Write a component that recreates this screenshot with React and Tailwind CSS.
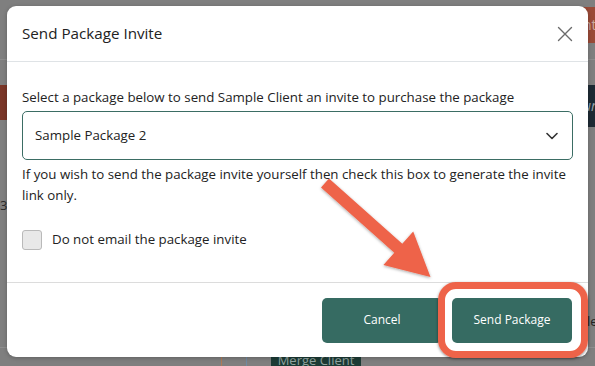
import React from "react";

function ChevronDown() {
  return (
    <svg width="12" height="8" viewBox="0 0 12 8" fill="none">
      <path d="M1 1.5 L6 6.5 L11 1.5" stroke="#333" strokeWidth="1.6" strokeLinecap="round" strokeLinejoin="round" />
    </svg>
  );
}

function CloseX() {
  return (
    <svg width="16" height="16" viewBox="0 0 16 16" fill="none">
      <path d="M1.5 1.5 L14.5 14.5 M14.5 1.5 L1.5 14.5" stroke="#6b6b6b" strokeWidth="1.4" strokeLinecap="round" />
    </svg>
  );
}

export default function App() {
  const font = { fontFamily: '"Open Sans", "Noto Sans", sans-serif' };
  return (
    <div className="relative w-[595px] h-[366px] overflow-hidden bg-[#7f7f7f]" style={font}>
      {/* page fragments under the overlay */}
      <div className="absolute left-0 top-[59px] w-full h-px bg-[#8c8c8c]" />
      <div className="absolute left-0 top-[85px] w-[10px] h-[35px] bg-[#7a3627]" />
      <div className="absolute right-0 top-[7px] w-[12px] h-[36px] bg-[#9a4a37] text-[#c9a89c] text-[14px] leading-[36px] overflow-hidden">nt</div>
      <div className="absolute right-0 top-[85px] w-[12px] h-[42px] bg-[#1d2a34] text-[#9aa4ad] text-[14px] italic leading-[42px] overflow-hidden">ur</div>
      <div className="absolute left-0 top-[196px] text-[13px] text-[#2b2b2b]">3</div>
      <div className="absolute right-0 w-[8px] top-[312px] text-[13px] text-[#222] overflow-hidden">le</div>
      <div className="absolute left-0 top-[347px] w-full h-px bg-[#8e8e8e]" />
      <div className="absolute left-[221px] top-[347px] w-px h-[19px] bg-[#b07a55]" />
      <div className="absolute left-[246px] top-[347px] w-px h-[19px] bg-[#6f8aa3]" />
      <div className="absolute left-[271px] top-[352px] w-[90px] h-[20px] bg-[#1c3b35] text-[#8fa39f] text-[13px] text-center leading-[16px]">Merge Client</div>

      {/* modal */}
      <div className="relative z-10 ml-[7px] mt-[6px] w-[581px] h-[351px] bg-white rounded-[9px] flex flex-col shadow-[0_1px_4px_rgba(0,0,0,0.25)]">
        <div className="h-[56px] shrink-0 flex items-center justify-between pl-[15px] pr-[15px] border-b border-[#dfe3e6]">
          <div className="text-[15.2px] text-[#222] leading-none">Send Package Invite</div>
          <CloseX />
        </div>
        <div className="flex-1 px-[15px] pt-[25px] flex flex-col">
          <div className="text-[13.3px] leading-[20px] text-[#222]">Select a package below to send Sample Client an invite to purchase the package</div>
          <div className="mt-[4px] h-[49px] border border-[#3b6d64] rounded-[5px] flex items-center justify-between pl-[12px] pr-[14px]">
            <span className="text-[13.3px] text-[#222]">Sample Package 2</span>
            <ChevronDown />
          </div>
          <div className="mt-[4px] text-[13.3px] leading-[21px] text-[#222]">
            If you wish to send the package invite yourself then check this box to generate the invite link only.
          </div>
          <div className="mt-[24px] flex items-center gap-[10px]">
            <div className="w-[20px] h-[20px] rounded-[3px] bg-[#e8e8e8] border border-[#b9b9b9]" />
            <span className="text-[13.3px] text-[#222]">Do not email the package invite</span>
          </div>
        </div>
        <div className="h-[75px] shrink-0 border-t border-[#dcdcdc] flex items-center justify-end gap-[10px] pr-[16px]">
          <button className="w-[120px] h-[45px] rounded-[5px] bg-[#366b62] text-white text-[12px]">Cancel</button>
          <button className="w-[120px] h-[45px] rounded-[5px] bg-[#366b62] text-white text-[12px]">Send Package</button>
        </div>
      </div>

      {/* highlight ring */}
      <div className="absolute z-20 left-[438px] top-[282px] w-[150px] h-[76px] rounded-[18px] border-[7px] border-[#ee6349] shadow-[0_1px_3px_rgba(0,0,0,0.45)]" />

      {/* arrow */}
      <svg className="absolute z-20 left-0 top-0 pointer-events-none" width="595" height="366" viewBox="0 0 595 366">
        <defs>
          <filter id="sh" x="-20%" y="-20%" width="140%" height="140%">
            <feDropShadow dx="0" dy="1" stdDeviation="1.5" floodColor="#000" floodOpacity="0.35" />
          </filter>
        </defs>
        <polygon
          points="329,178.5 402.3,243.8 413.2,231.6 430.5,277 383.4,265 394.3,252.8 321,187.5"
          fill="#ee6349"
          filter="url(#sh)"
        />
      </svg>
    </div>
  );
}
